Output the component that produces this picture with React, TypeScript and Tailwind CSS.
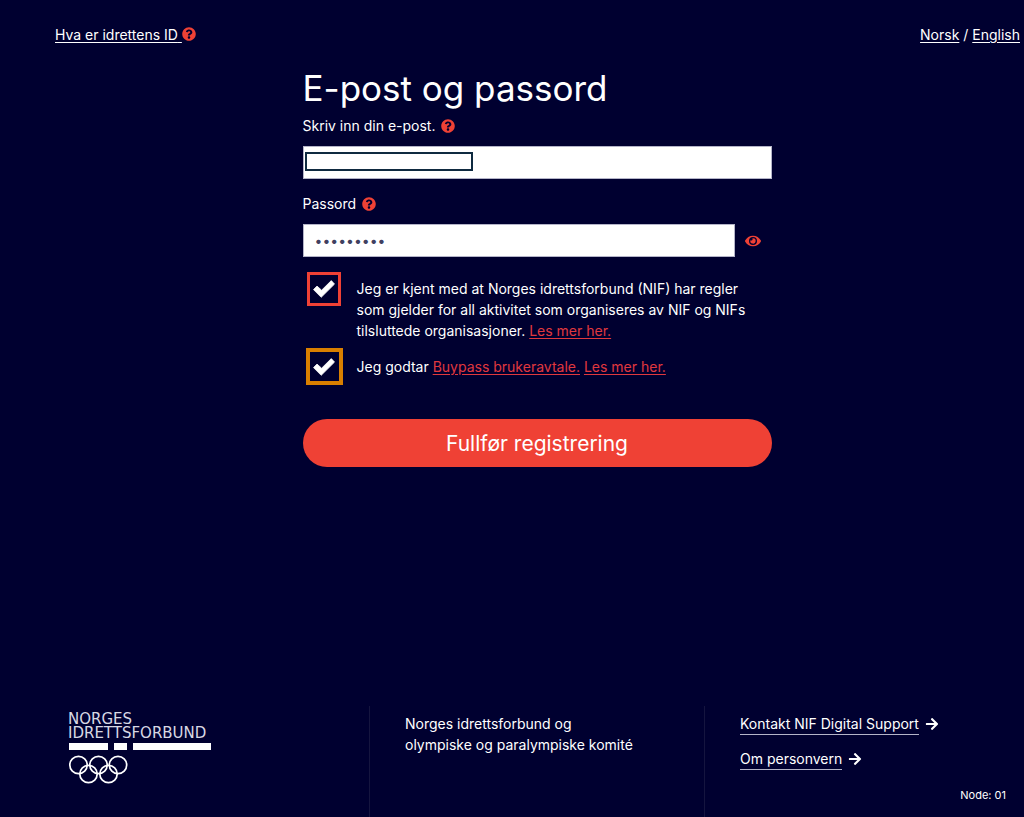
import { useState } from "react";
import { FaArrowRight, FaEye, FaQuestionCircle } from "react-icons/fa";

const Help = ({ label }: { label: string }) => (
  <button type="button" aria-label={label} className="inline-flex align-middle text-[#ef4135]">
    <FaQuestionCircle className="size-3.5" />
  </button>
);

const Tick = () => (
  <svg
    viewBox="0 0 22 18"
    className="pointer-events-none absolute inset-0 m-auto hidden w-[22px] peer-checked:block"
    aria-hidden="true"
  >
    <path
      d="M.5 9.6 4 6.1l4.6 4.1L18.3.6l3.2 3.5L8.2 17.3z"
      fill="#fff"
      stroke="#fff"
      strokeWidth="0.8"
      strokeLinejoin="round"
    />
  </svg>
);

const Logo = () => (
  <svg viewBox="0 0 144 74" className="w-36" role="img" aria-label="Norges idrettsforbund">
    <g fill="#d8d8e4" fontFamily="'DejaVu Sans', sans-serif" fontSize="15">
      <text x="0" y="14">NORGES</text>
      <text x="0" y="28">IDRETTSFORBUND</text>
    </g>
    <g fill="#fff">
      <rect x="1" y="33" width="39" height="7" />
      <rect x="46" y="33" width="13" height="7" />
      <rect x="65" y="33" width="78" height="7" />
    </g>
    <g fill="none" stroke="#fff" strokeWidth="1.7">
      <circle cx="10.5" cy="55" r="8.7" />
      <circle cx="30.5" cy="55" r="8.7" />
      <circle cx="50" cy="55" r="8.7" />
      <circle cx="20.5" cy="64" r="8.7" />
      <circle cx="40.5" cy="64" r="8.7" />
    </g>
  </svg>
);

export default function App() {
  const [showPassword, setShowPassword] = useState(false);

  return (
    <div className="flex min-h-screen flex-col bg-[#000030] font-['Inter',sans-serif] text-sm leading-[21px] text-white">
      <header className="flex items-center justify-between pt-6 pr-1 pl-[55px]">
        <a href="#id" className="underline underline-offset-2">
          Hva er idrettens ID{" "}
          <FaQuestionCircle className="inline size-3.5 align-[-1px] text-[#ef4135]" />
        </a>
        <nav>
          <a href="#no" className="underline underline-offset-2">Norsk</a>
          {" / "}
          <a href="#en" className="underline underline-offset-2">English</a>
        </nav>
      </header>

      <main className="flex-1 pr-[5px] pl-[55px]">
        <form className="mx-auto max-w-[469px] pt-5" onSubmit={(e) => e.preventDefault()}>
          <h1 className="text-[35px] leading-[46px]">E-post og passord</h1>

          <div className="mt-1 flex items-center gap-1.5">
            <label htmlFor="email">Skriv inn din e-post.</label>
            <Help label="Hjelp om e-post" />
          </div>
          <div className="relative mt-2.5">
            <input
              id="email"
              type="email"
              className="block h-[33px] w-full border border-[#b4b4c8] bg-white px-3 text-[#30304f]"
            />
            <span className="pointer-events-none absolute top-1.5 left-0.5 h-[19px] w-[168px] border-2 border-[#0f2a40]" />
          </div>

          <div className="mt-3.5 flex items-center gap-1.5">
            <label htmlFor="password">Passord</label>
            <Help label="Hjelp om passord" />
          </div>
          <div className="mt-2.5 flex items-center">
            <input
              id="password"
              type={showPassword ? "text" : "password"}
              defaultValue="idrett123"
              className="h-[33px] min-w-0 flex-1 border border-[#b4b4c8] bg-white px-[11px] text-[#404060]"
            />
            <button
              type="button"
              aria-label="Vis passord"
              className="flex w-[37px] justify-center text-[#ef4135]"
              onClick={() => setShowPassword(!showPassword)}
            >
              <FaEye className="size-4" />
            </button>
          </div>

          <div className="mt-[15px] flex pl-1">
            <span className="relative flex size-[34px] shrink-0">
              <input
                id="rules"
                type="checkbox"
                defaultChecked
                className="peer size-full appearance-none border-3 border-[#ef4135]"
              />
              <Tick />
            </span>
            <label htmlFor="rules" className="ml-4 pt-1.5 pr-4">
              Jeg er kjent med at Norges idrettsforbund (NIF) har regler som gjelder for all aktivitet
              som organiseres av NIF og NIFs tilsluttede organisasjoner.{" "}
              <a href="#rules" className="text-[#e0383e] underline underline-offset-2">Les mer her.</a>
            </label>
          </div>

          <div className="mt-[7px] flex items-center pl-[3px]">
            <span className="relative flex size-[37px] shrink-0">
              <input
                id="terms"
                type="checkbox"
                defaultChecked
                className="peer size-full appearance-none border-4 border-[#d97f00]"
              />
              <Tick />
            </span>
            <label htmlFor="terms" className="ml-3.5">
              Jeg godtar{" "}
              <a href="#terms" className="text-[#e0383e] underline underline-offset-2">Buypass brukeravtale.</a>{" "}
              <a href="#more" className="text-[#e0383e] underline underline-offset-2">Les mer her.</a>
            </label>
          </div>

          <button
            type="submit"
            className="mt-[34px] h-12 w-full rounded-full bg-[#ef4135] text-[21px]"
          >
            Fullfør registrering
          </button>
        </form>
      </main>

      <footer className="grid min-h-[111px] grid-cols-[335fr_335fr_320fr] pl-[34px]">
        <div className="pt-1 pl-[34px]">
          <Logo />
        </div>
        <div className="border-l border-[#15153f] pt-[7px] pl-[35px]">
          <p>
            Norges idrettsforbund og
            <br />
            olympiske og paralympiske komité
          </p>
        </div>
        <div className="flex flex-col border-l border-[#15153f] pt-[7px] pl-[35px]">
          <a href="#support" className="flex items-center gap-1.5">
            <span className="border-b border-[#b4b4c8]">Kontakt NIF Digital Support</span>
            <FaArrowRight className="size-3.5" />
          </a>
          <a href="#privacy" className="mt-[13px] flex items-center gap-1.5">
            <span className="border-b border-[#b4b4c8]">Om personvern</span>
            <FaArrowRight className="size-3.5" />
          </a>
          <p className="mt-auto pr-[18px] pb-[11px] text-right text-[11px]">Node: 01</p>
        </div>
      </footer>
    </div>
  );
}
